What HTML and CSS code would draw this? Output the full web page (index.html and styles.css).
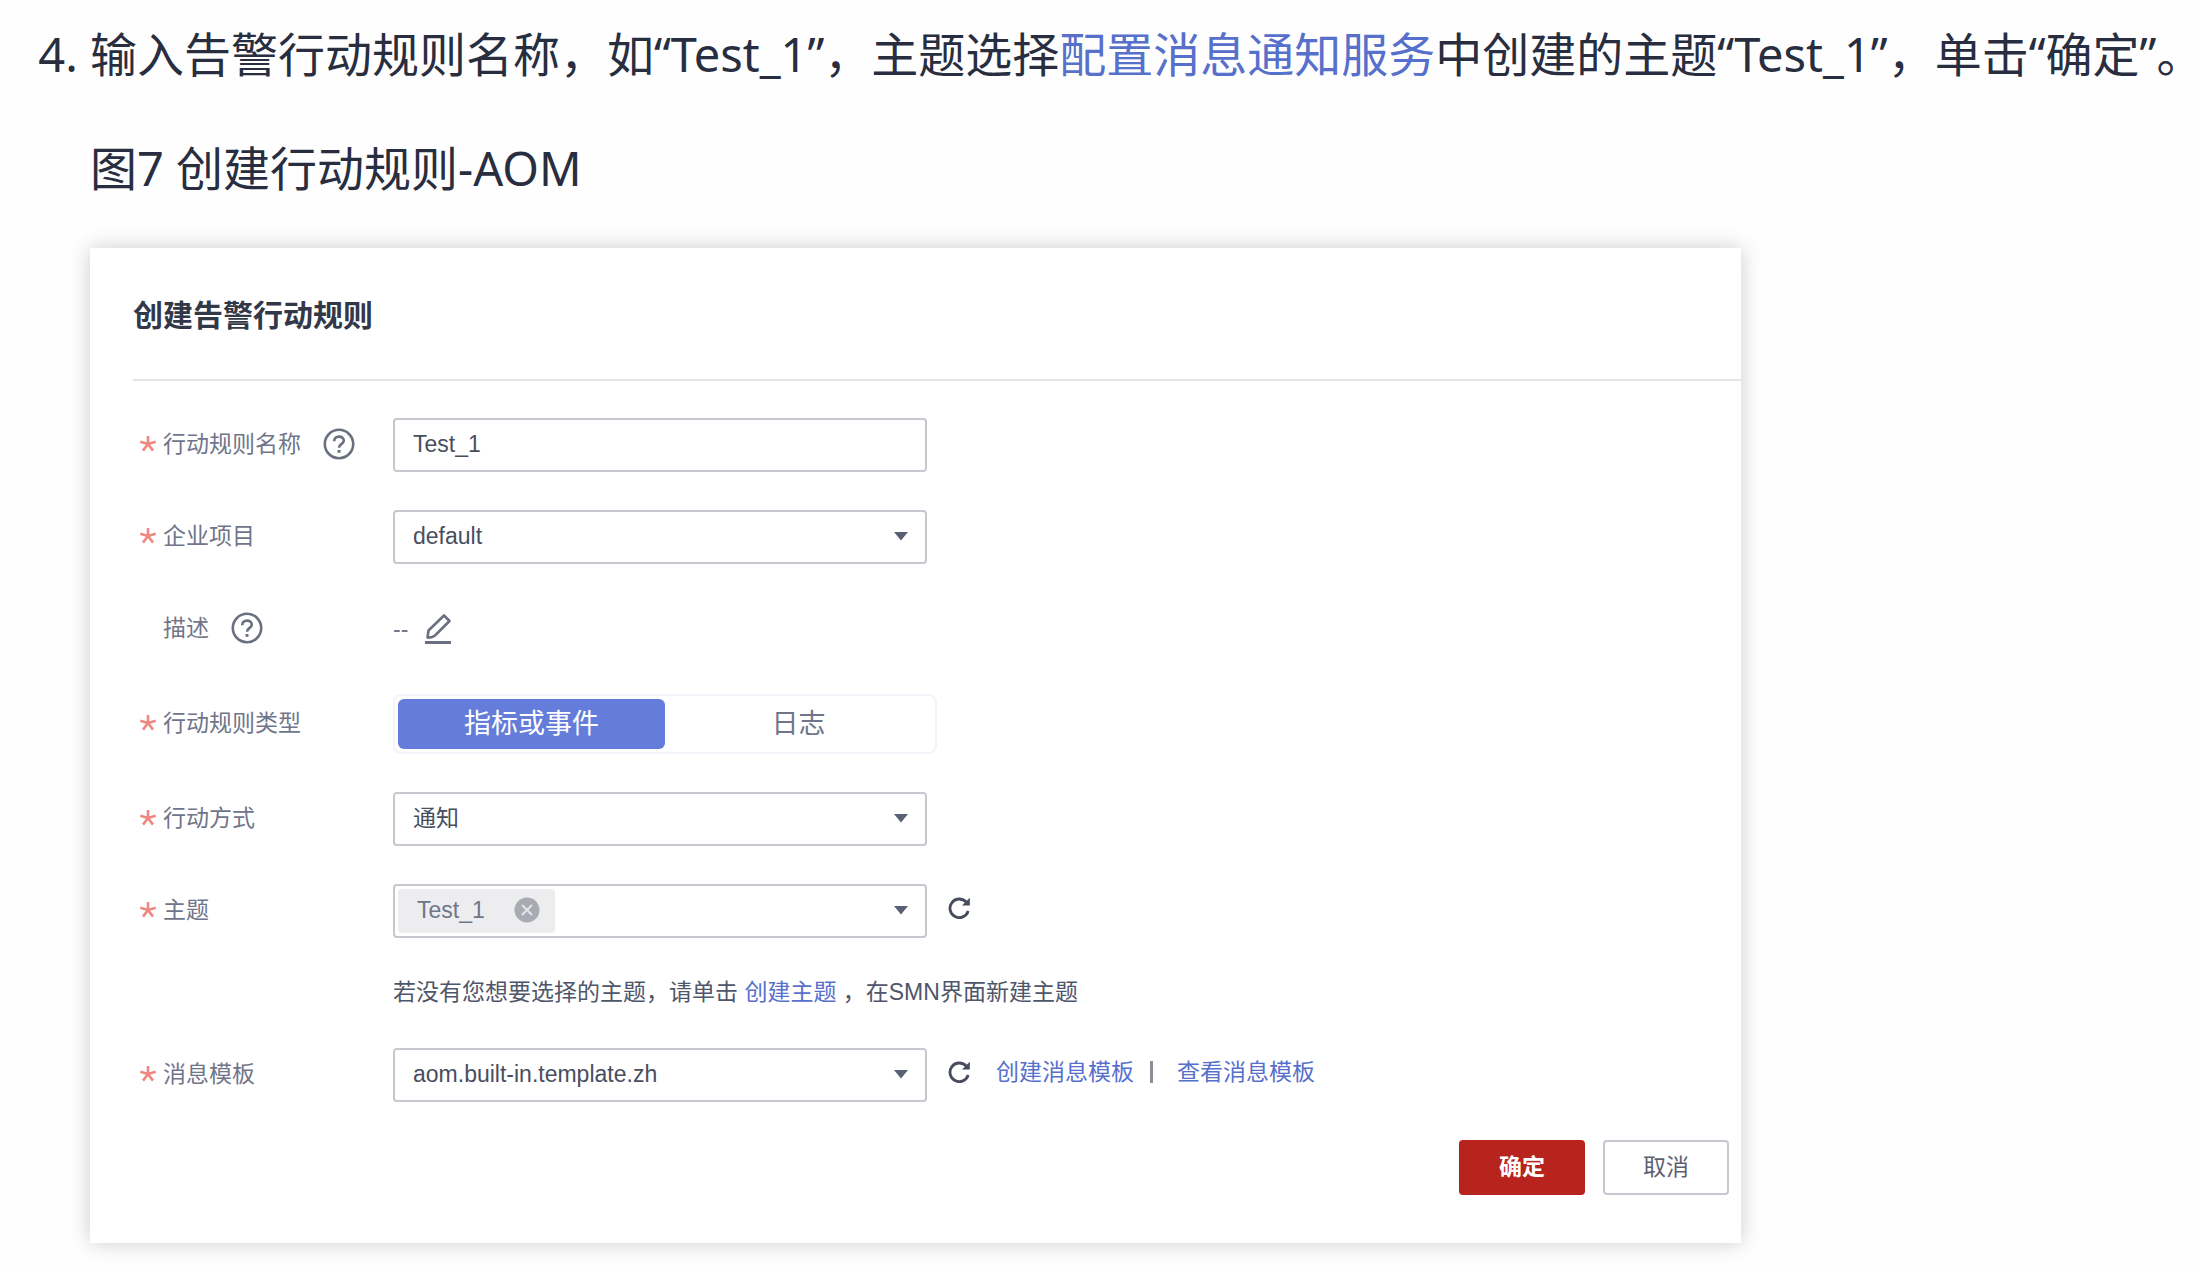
FILE: index.html
```html
<!DOCTYPE html>
<html lang="zh-CN">
<head>
<meta charset="utf-8">
<title>创建行动规则-AOM</title>
<link rel="stylesheet" href="styles.css">
</head>
<body>
<svg class="defs" aria-hidden="true">
  <symbol id="star" viewBox="0 0 18 18"><path d="M9 9V1M9 9L1.3 6.8M9 9L4 15.6M9 9L14 15.6M9 9L16.700 6.800" fill="none" stroke="currentColor" stroke-width="2.600"/></symbol>
  <symbol id="help" viewBox="0 0 32 32"><circle cx="16" cy="16" r="14.200" fill="none" stroke="currentColor" stroke-width="2.600"/><path d="M11.200 13.200C11.200 10.200 13.200 8.600 16 8.600S20.800 10.300 20.800 12.700C20.800 15.800 16 16 16 19.800" fill="none" stroke="currentColor" stroke-width="2.600"/><path d="M14.500 22h3v2.800h-3z" fill="currentColor"/></symbol>
  <symbol id="caret" viewBox="0 0 14 10"><path d="M0 1h14L7 9.500z" fill="currentColor"/></symbol>
  <symbol id="refresh" viewBox="0 0 24 24"><path d="M19.300 6.200A9.300 9.300 0 1 0 21.200 15" fill="none" stroke="currentColor" stroke-width="2.800"/><path d="M22.800 1.800V9.600H15z" fill="currentColor"/></symbol>
  <symbol id="edit" viewBox="0 0 28 32"><path d="M3.500 24.500L4.500 17.500L20 2.500L25.500 8L11 22.500Q8 25 3.500 24.500Z" fill="none" stroke="currentColor" stroke-width="2.600" stroke-linejoin="round"/><path d="M1 28h26v3H1z" fill="currentColor"/></symbol>
  <symbol id="remove" viewBox="0 0 26 26"><circle cx="13" cy="13" r="12.500" fill="#a9abb3"/><path d="M8 8l10 10M18 8L8 18" stroke="#e4e5e8" stroke-width="2"/></symbol>
</svg>
<ol class="steps" start="4">
  <li>
    <p class="step-text">输入告警行动规则名称，如“Test_1”，主题选择<a href="#smn">配置消息通知服务</a>中创建的主题“Test_1”，单击“确定”<span class="end-mark">。</span></p>
    <figure class="figure">
      <figcaption class="caption">图7 创建行动规则-AOM</figcaption>
      <form class="card">
        <h2 class="card-title">创建告警行动规则</h2>
        <div class="rows">
          <div class="row">
            <div class="label"><svg class="star"><use href="#star"/></svg><label for="name">行动规则名称</label><button type="button" class="icon-btn" aria-label="名称帮助"><svg class="help"><use href="#help"/></svg></button></div>
            <input class="control" id="name" type="text" value="Test_1">
          </div>
          <div class="row">
            <div class="label"><svg class="star"><use href="#star"/></svg><label for="project">企业项目</label></div>
            <div class="control-wrap"><select class="control" id="project"><option>default</option></select><svg class="caret"><use href="#caret"/></svg></div>
          </div>
          <div class="row">
            <div class="label"><span class="star"></span><span>描述</span><button type="button" class="icon-btn" aria-label="描述帮助"><svg class="help"><use href="#help"/></svg></button></div>
            <div class="desc"><span>--</span><button type="button" class="icon-btn" aria-label="编辑描述"><svg class="edit"><use href="#edit"/></svg></button></div>
          </div>
          <div class="row">
            <div class="label" id="type-label"><svg class="star"><use href="#star"/></svg><span>行动规则类型</span></div>
            <div class="segmented" role="radiogroup" aria-labelledby="type-label">
              <label class="segment"><input type="radio" name="type" checked><span>指标或事件</span></label>
              <label class="segment"><input type="radio" name="type"><span>日志</span></label>
            </div>
          </div>
          <div class="row">
            <div class="label"><svg class="star"><use href="#star"/></svg><label for="method">行动方式</label></div>
            <div class="control-wrap"><select class="control" id="method"><option>通知</option></select><svg class="caret"><use href="#caret"/></svg></div>
          </div>
          <div class="row">
            <div class="label"><svg class="star"><use href="#star"/></svg><label for="topic">主题</label></div>
            <div class="control-wrap tags">
              <span class="tag">Test_1<button type="button" class="icon-btn" aria-label="移除"><svg class="remove"><use href="#remove"/></svg></button></span>
              <select class="tag-select" id="topic"><option></option></select><svg class="caret"><use href="#caret"/></svg>
            </div>
            <div class="side"><button type="button" class="icon-btn" aria-label="刷新主题"><svg class="refresh"><use href="#refresh"/></svg></button></div>
            <p class="hint">若没有您想要选择的主题，请单击 <a href="#topic-new">创建主题</a> ，在SMN界面新建主题</p>
          </div>
          <div class="row">
            <div class="label"><svg class="star"><use href="#star"/></svg><label for="template">消息模板</label></div>
            <div class="control-wrap"><select class="control" id="template"><option>aom.built-in.template.zh</option></select><svg class="caret"><use href="#caret"/></svg></div>
            <div class="side"><button type="button" class="icon-btn" aria-label="刷新模板"><svg class="refresh"><use href="#refresh"/></svg></button><span class="links"><a href="#create">创建消息模板</a><span class="bar"></span><a href="#view">查看消息模板</a></span></div>
          </div>
        </div>
        <div class="actions">
          <button type="button" class="btn btn-primary">确定</button>
          <button type="button" class="btn">取消</button>
        </div>
      </form>
    </figure>
  </li>
</ol>
</body>
</html>
```
FILE: styles.css
```css
* { box-sizing: border-box; }
body {
  margin: 0;
  background: #fefefe;
  color: #282e3f;
  font: 47px/64px "Noto Sans", "Noto Sans CJK SC", sans-serif;
}
a { color: #5670cb; text-decoration: none; }
.defs { position: absolute; width: 0; height: 0; }
.steps { margin: 0; padding: 22px 0 24px 90px; }
.step-text { margin: 0 0 50px; white-space: nowrap; }
/* half-width full stop at the line end */
.end-mark { font-family: "Noto Sans CJK SC", sans-serif; font-feature-settings: "halt"; line-height: 1; }
.figure { margin: 0; }
.caption { margin-bottom: 48px; }

.card {
  max-width: 1651px;
  padding: 44px 0 48px 43px;
  background: #fff;
  box-shadow: 0 0 20px rgba(0, 0, 0, 0.2);
  color: #50566a;
  font: 23px/32px "Liberation Sans", "Noto Sans CJK SC", sans-serif;
}
.card-title {
  margin: 0;
  padding-bottom: 39px;
  border-bottom: 2px solid #e4e5eb;
  color: #323848;
  font-size: 30px;
  line-height: 48px;
}
.rows { display: flex; flex-direction: column; gap: 38px; padding: 37px 0 38px 6px; }
.row {
  display: grid;
  grid-template-columns: 254px 534px 1fr;
  align-items: center;
  min-height: 54px;
}
.label { display: flex; align-items: center; color: #70758a; padding-bottom: 2px; }
.star { width: 18px; height: 18px; margin-right: 6px; color: #ee8880; }
.label .icon-btn { margin-left: 22px; color: #6b7080; }
.icon-btn { display: flex; padding: 0; border: 0; background: none; color: #464c5c; }
.help { width: 32px; height: 32px; }

.control-wrap { position: relative; display: flex; }
.control {
  width: 100%;
  height: 54px;
  padding: 0 18px 2px;
  border: 2px solid #c6c8d0;
  border-radius: 4px;
  background: #fff;
  color: #484e60;
  font: inherit;
  appearance: none;
}
.caret {
  position: absolute;
  right: 19px;
  top: 21px;
  width: 14px;
  height: 10px;
  color: #596073;
  pointer-events: none;
}
.desc { display: flex; align-items: center; gap: 16px; color: #70758a; }
.desc .icon-btn { color: #6b7080; }
.edit { width: 28px; height: 32px; }

.segmented {
  display: flex;
  width: 544px;
  height: 60px;
  padding: 3px;
  border: 2px solid #f3f4fa;
  border-radius: 8px;
  font-size: 27px;
}
.segment { flex: 1; display: flex; color: #70758a; }
.segment input { position: absolute; opacity: 0; }
.segment span { flex: 1; display: flex; align-items: center; justify-content: center; border-radius: 6px; }
.segment input:checked + span { background: #647dda; color: #fff; }

.tags { height: 54px; padding: 3px; border: 2px solid #c6c8d0; border-radius: 4px; background: #fff; }
.tags .caret { right: 17px; top: 19px; }
.tag {
  display: flex;
  align-items: center;
  gap: 29px;
  height: 44px;
  padding: 0 15px 2px 19px;
  border-radius: 4px;
  background: #ededf0;
  color: #70758a;
}
.remove { width: 26px; height: 26px; }
.tag-select { flex: 1; border: 0; background: none; appearance: none; }

.side { display: flex; align-items: center; padding: 0 0 6px 20px; }
.refresh { width: 24px; height: 24px; }
.links { display: flex; align-items: center; margin-left: 25px; }
.bar { width: 3px; height: 22px; margin: 0 24px 0 16px; background: #8b8e99; }
.hint { grid-column: 2 / 4; margin: 36px 0 0; line-height: 36px; }

.actions { display: flex; justify-content: flex-end; gap: 18px; padding-right: 12px; }
.btn {
  width: 126px;
  height: 55px;
  padding: 0 0 2px;
  border: 2px solid #c6c8d0;
  border-radius: 4px;
  background: #fff;
  color: #5c6172;
  font: inherit;
}
.btn-primary { border-color: #b7241e; background: #b7241e; color: #fff; font-weight: bold; }
```
